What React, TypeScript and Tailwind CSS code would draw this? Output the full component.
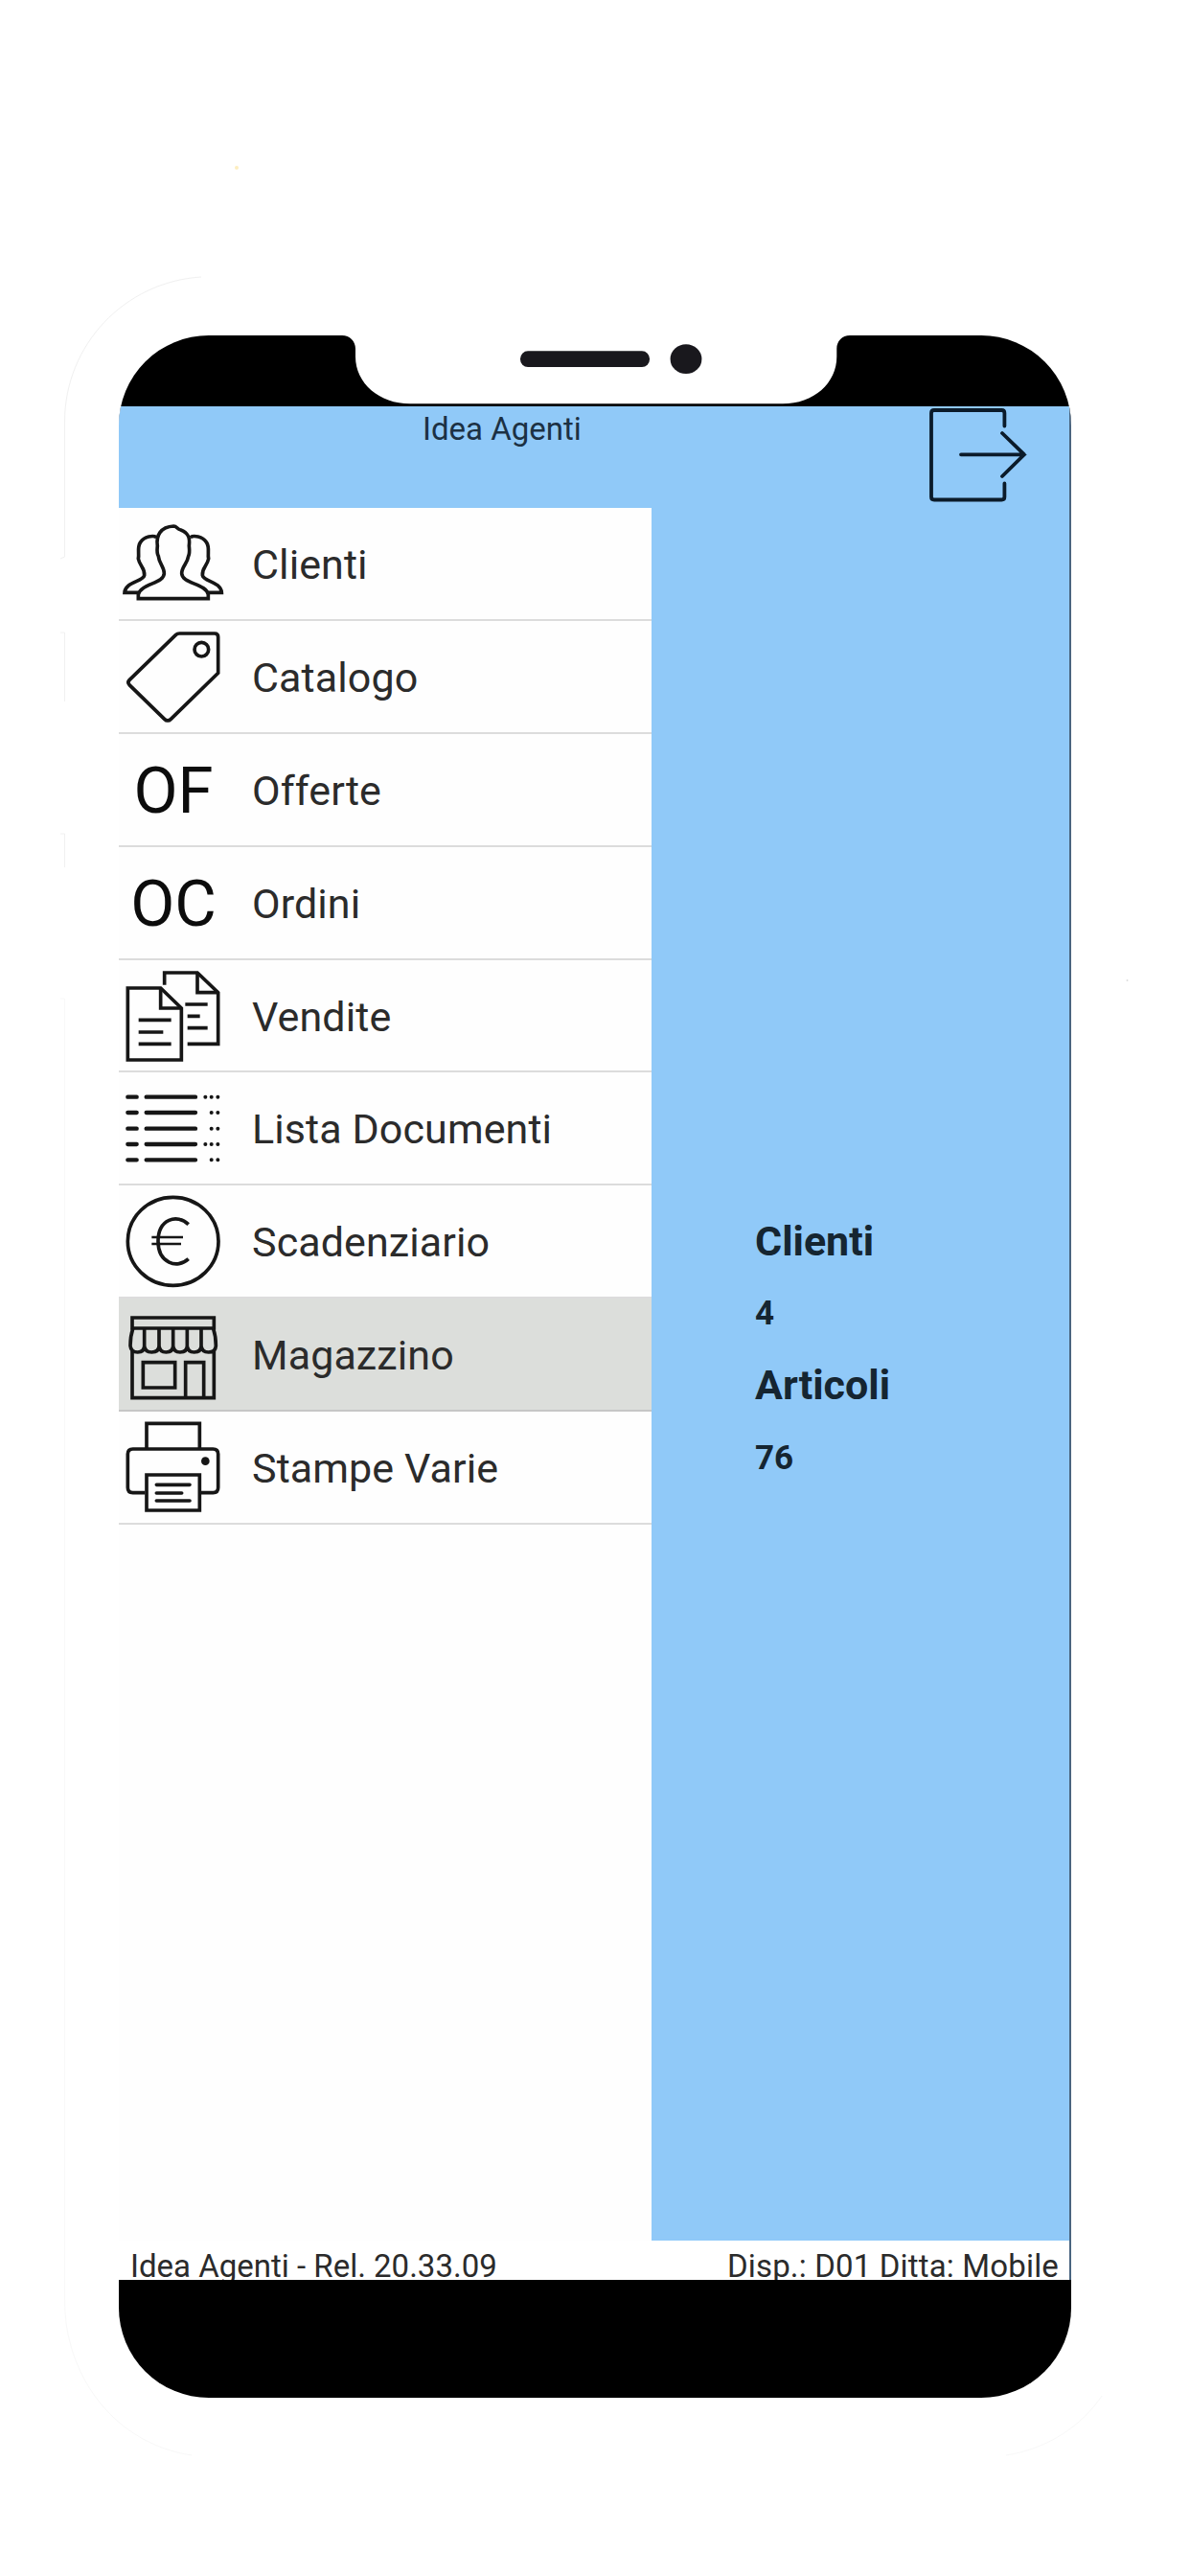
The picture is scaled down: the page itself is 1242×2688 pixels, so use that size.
import type { ReactNode } from "react";
import { clsx } from "clsx";

type IconProps = {
  viewBox: string;
  children: ReactNode;
};

function Icon({ viewBox, children }: IconProps) {
  return (
    <svg
      viewBox={viewBox}
      className="h-[116px] w-[110px]"
      fill="none"
      stroke="currentColor"
      strokeWidth={11}
    >
      {children}
    </svg>
  );
}

function PeopleIcon() {
  return (
    <Icon viewBox="42 31 330 348">
      <path d="M160 123C150 116 122 120 110 138C98 155 107 175 103 190C108 215 124 218 122 242C118 262 62 262 60 296H104" />
      <path d="M266 123C276 116 304 120 316 138C328 155 319 175 323 190C318 215 302 218 304 242C308 262 362 262 364 296H322" />
      <path d="M103 315V302C110 268 184 268 184 236C184 215 168 205 166 182C160 172 162 162 163 150C158 118 172 90 214 88C224 88 224 98 236 100C258 108 266 122 262 150C263 162 265 172 260 182C257 205 239 215 239 236C239 268 316 268 322 302V315Z" />
    </Icon>
  );
}

function TagIcon() {
  return (
    <Icon viewBox="42 385 330 348">
      <path d="M232 424H342Q353 424 353 435V548L205 692Q195 702 185 692L75 585Q68 577 75 570L220 429Q225 424 232 424Z" />
      <circle cx="301" cy="474" r="22" />
    </Icon>
  );
}

function DocumentsIcon() {
  return (
    <Icon viewBox="42 36 330 348">
      <path d="M70 123H173L238 186V348H70Z" />
      <path d="M173 123V186H238" />
      <path d="M185 113V75H288L353 137V298H257" />
      <path d="M288 75V137H353" />
      <path d="M104 223H206M104 261H181M104 298H206M250 174H320M257 211H296M257 248H320" />
    </Icon>
  );
}

function ListIcon() {
  const rows = [
    { y: 466, dots: 3 },
    { y: 515, dots: 2 },
    { y: 565, dots: 2 },
    { y: 614, dots: 3 },
    { y: 663, dots: 2 },
  ];

  return (
    <Icon viewBox="42 389 330 348">
      {rows.map(({ y, dots }) => (
        <g key={y} strokeWidth={13} strokeLinecap="round">
          <path d={`M70 ${y}H98M128 ${y}H282`} />
          <path strokeWidth={12} d={`M332 ${y}h.1M352 ${y}h.1`} />
          {dots === 3 ? <path strokeWidth={12} d={`M313 ${y}h.1`} /> : null}
        </g>
      ))}
    </Icon>
  );
}

function EuroIcon() {
  return (
    <Icon viewBox="42 23 330 348">
      <ellipse cx="212" cy="198" rx="142" ry="138" />
      <path d="M260 145C225 110 165 128 165 198C165 266 225 286 260 253" />
      <path strokeWidth={8} d="M145 185H243M145 206H237" />
    </Icon>
  );
}

function StoreIcon() {
  return (
    <Icon viewBox="42 377 330 348">
      <path d="M84 475V437H340V475" />
      <path d="M84 540V688H340V540" />
      <path d="M84 470H340" />
      <path d="M86 472Q78 495 78 525Q80 545 101 545Q122 545 122 525V472M122 525Q124 545 145 545Q168 545 168 525V472M168 525Q170 545 190 545Q212 545 212 525V472M212 525Q214 545 234 545Q256 545 256 525V472M256 525Q258 545 278 545Q300 545 300 525V472M300 525Q302 545 323 545Q345 545 346 525Q346 495 338 472" />
      <path d="M118 577H218V656H118Z" />
      <path d="M251 688V577H308V688" />
    </Icon>
  );
}

function PrinterIcon() {
  return (
    <Icon viewBox="42 41 330 348">
      <path d="M129 158V78H295V158" />
      <path d="M124 295H86Q70 295 70 279V174Q70 158 86 158H337Q353 158 353 174V279Q353 295 337 295H300" />
      <path d="M129 239H295V350H129Z" />
      <path strokeLinecap="round" d="M160 270H264M160 296H239M160 320H264" />
      <circle cx="313" cy="196" r="13" fill="currentColor" stroke="none" />
    </Icon>
  );
}

function ExitIcon() {
  return (
    <svg
      viewBox="0 0 110 102"
      className="h-[102px] w-[110px]"
      fill="none"
      stroke="#0b1b2a"
      strokeWidth={3.8}
      strokeLinecap="round"
    >
      <path d="M81.4 20.5V7Q81.4 4 78.4 4H8Q5 4 5 7V94.500Q5 97.500 8 97.500H78.4Q81.4 97.500 81.4 94.500V80.500" />
      <path d="M36 50.300H102M79 28L102 50.300L79 73" />
    </svg>
  );
}

function Initials({ children }: { children: string }) {
  return (
    <span className="mt-[3px] ml-[4px] text-[67px] leading-none text-[#0c0c0c]">
      {children}
    </span>
  );
}

const menu = [
  { label: "Clienti", icon: <PeopleIcon /> },
  { label: "Catalogo", icon: <TagIcon /> },
  { label: "Offerte", icon: <Initials>OF</Initials> },
  { label: "Ordini", icon: <Initials>OC</Initials> },
  { label: "Vendite", icon: <DocumentsIcon /> },
  { label: "Lista Documenti", icon: <ListIcon /> },
  { label: "Scadenziario", icon: <EuroIcon /> },
  { label: "Magazzino", icon: <StoreIcon />, selected: true },
  { label: "Stampe Varie", icon: <PrinterIcon /> },
];

function Notch() {
  return (
    <svg
      viewBox="0 0 994 74"
      className="absolute left-0 top-0 h-[74px] w-[994px]"
    >
      <path
        fill="#fff"
        d="M233 -1V0C241 0 247 6 247 14V22C247 50 272 71.300 304 71.300H693C725 71.300 749.300 50 749.300 22V14C749.300 6 755 0 763 0V-1Z"
      />
      <rect x="419" y="16.300" width="135" height="16.700" rx="8" fill="#19181d" />
      <ellipse cx="592" cy="24.700" rx="16.400" ry="15.400" fill="#19181d" />
    </svg>
  );
}

export default function App() {
  return (
    <div className="relative h-[2688px] w-[1242px] overflow-hidden bg-white pt-[350px] font-['Roboto',sans-serif]">
      {/* faint edge of the phone body */}
      <svg
        viewBox="0 0 1242 2688"
        className="absolute inset-0 h-[2688px] w-[1242px]"
        fill="none"
        stroke="#f0f0f0"
      >
        <path d="M210 289C130 294 67.500 360 67.500 440V581L63 583" />
        <path d="M63 660H67.500V732M63 870H67.500V905" />
        <path stroke="#f8f8f8" d="M63 1042H67.500V2400C67.500 2480 120 2550 200 2562" />
        <path stroke="#f8f8f8" d="M1050 2562C1095 2555 1130 2530 1150 2500" />
        <circle cx="247" cy="175" r="2" fill="#fdeec0" stroke="none" />
        <circle cx="1176.500" cy="1023" r="1" fill="#ddd" stroke="none" />
      </svg>

      <div className="relative ml-[124px] flex h-[2152px] w-[994px] flex-col overflow-hidden rounded-[94px] bg-black">
        <div className="h-[74px] shrink-0" />
        <Notch />

        <div className="flex h-[1955px] flex-col border-r-2 border-[#4a6580] bg-white">
          <header className="flex h-[106px] shrink-0 items-start justify-between bg-[#90c9f8] pr-[39px]">
            <h1 className="ml-[317px] mt-[4px] text-[33px] leading-[40px] text-[#1c3144]">
              Idea Agenti
            </h1>
            <ExitIcon />
          </header>

          <div className="flex h-[1808px] shrink-0">
            <ul className="w-[556px] shrink-0 bg-[#fefefe]">
              {menu.map(({ label, icon, selected }) => (
                <li
                  key={label}
                  className={clsx(
                    "flex h-[117.9px] items-center border-b-2 text-[#161616]",
                    selected
                      ? "border-[#c6c6c6] bg-[#dcdedb]"
                      : "border-[#dcdcdc]",
                  )}
                >
                  <div className="flex h-full w-[110px] shrink-0 items-center justify-center">
                    {icon}
                  </div>
                  <span className="mt-[3px] ml-[29px] whitespace-nowrap text-[43px] leading-none tracking-[0.1px] text-[#2b2b2b]">
                    {label}
                  </span>
                </li>
              ))}
            </ul>

            <dl className="flex-1 bg-[#90c9f8] pl-[108px] pt-[728px] font-bold text-[#152531]">
              <dt className="h-[75px] text-[43px] leading-[75px]">Clienti</dt>
              <dd className="h-[75px] text-[35px] leading-[75px]">4</dd>
              <dt className="h-[75px] text-[43px] leading-[75px]">Articoli</dt>
              <dd className="h-[75px] text-[35px] leading-[77px]">76</dd>
            </dl>
          </div>

          <footer className="flex h-[41px] shrink-0 justify-between overflow-hidden bg-white pl-[12px] pr-[11px] text-[33px] leading-[54px] text-[#2b2b2b]">
            <span>Idea Agenti - Rel. 20.33.09</span>
            <span className="tracking-[0.16px]">Disp.: D01 Ditta: Mobile</span>
          </footer>
        </div>
      </div>
    </div>
  );
}
